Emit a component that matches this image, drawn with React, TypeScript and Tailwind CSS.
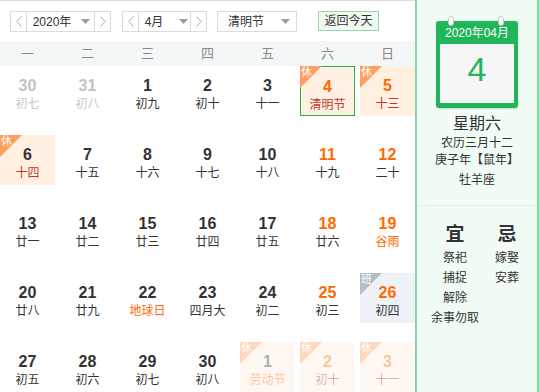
import React from "react";

type Day = {
  n: number;
  lunar: string;
  weekend?: boolean;
  badge?: "休" | "班";
  lunarColor?: "red" | "orange";
  faded?: boolean;
  other?: boolean;
  selected?: boolean;
};

const weeks: Day[][] = [
  [
    { n: 30, lunar: "初七", other: true },
    { n: 31, lunar: "初八", other: true },
    { n: 1, lunar: "初九" },
    { n: 2, lunar: "初十" },
    { n: 3, lunar: "十一" },
    { n: 4, lunar: "清明节", weekend: true, badge: "休", lunarColor: "red", selected: true },
    { n: 5, lunar: "十三", weekend: true, badge: "休", lunarColor: "red" },
  ],
  [
    { n: 6, lunar: "十四", badge: "休", lunarColor: "red" },
    { n: 7, lunar: "十五" },
    { n: 8, lunar: "十六" },
    { n: 9, lunar: "十七" },
    { n: 10, lunar: "十八" },
    { n: 11, lunar: "十九", weekend: true },
    { n: 12, lunar: "二十", weekend: true },
  ],
  [
    { n: 13, lunar: "廿一" },
    { n: 14, lunar: "廿二" },
    { n: 15, lunar: "廿三" },
    { n: 16, lunar: "廿四" },
    { n: 17, lunar: "廿五" },
    { n: 18, lunar: "廿六", weekend: true },
    { n: 19, lunar: "谷雨", weekend: true, lunarColor: "orange" },
  ],
  [
    { n: 20, lunar: "廿八" },
    { n: 21, lunar: "廿九" },
    { n: 22, lunar: "地球日", lunarColor: "orange" },
    { n: 23, lunar: "四月大" },
    { n: 24, lunar: "初二" },
    { n: 25, lunar: "初三", weekend: true },
    { n: 26, lunar: "初四", weekend: true, badge: "班" },
  ],
  [
    { n: 27, lunar: "初五" },
    { n: 28, lunar: "初六" },
    { n: 29, lunar: "初七" },
    { n: 30, lunar: "初八" },
    { n: 1, lunar: "劳动节", badge: "休", lunarColor: "orange", faded: true },
    { n: 2, lunar: "初十", weekend: true, badge: "休", lunarColor: "red", faded: true },
    { n: 3, lunar: "十一", weekend: true, badge: "休", lunarColor: "red", faded: true },
  ],
];

const Chevron = ({ dir }: { dir: "l" | "r" }) => (
  <svg width="6" height="11" viewBox="0 0 6 11" fill="none">
    <path
      d={dir === "l" ? "M5.5 0.5L0.8 5.5L5.5 10.5" : "M0.5 0.5L5.2 5.5L0.5 10.5"}
      stroke="#a8a8a8"
      strokeWidth="1"
    />
  </svg>
);

const Caret = () => (
  <svg width="9" height="5" viewBox="0 0 9 5">
    <path d="M0 0H9L4.5 5Z" fill="#999" />
  </svg>
);

const Stepper = ({ label, width, caretGap }: { label: string; width: string; caretGap: string }) => (
  <div className={`flex h-[21px] ${width} border border-[#dcdcdc] bg-white`}>
    <div className="w-[16px] flex items-center justify-center border-r border-[#dcdcdc]">
      <Chevron dir="l" />
    </div>
    <div className={`flex-1 flex items-center justify-center ${caretGap} text-[12px] text-[#333]`}>
      <span>{label}</span>
      <Caret />
    </div>
    <div className="w-[16px] flex items-center justify-center border-l border-[#dcdcdc]">
      <Chevron dir="r" />
    </div>
  </div>
);

const Cell = ({ d }: { d: Day }) => {
  const bg = d.badge === "班" ? "bg-[#eef2f6]" : d.badge === "休" ? "bg-[#fff0e1]" : "";
  const num = d.other ? "text-[#c4c4c4]" : d.weekend ? "text-[#ff6a00]" : "text-[#333]";
  const lun = d.other
    ? "text-[#c8c8c8]"
    : d.lunarColor === "red"
    ? "text-[#c0392b]"
    : d.lunarColor === "orange"
    ? "text-[#ff6a00]"
    : "text-[#333]";
  return (
    <div
      className={`relative h-[50px] flex flex-col items-center pt-[10px] ${bg} ${
        d.selected ? "border border-[#22b14c] pt-[9px]" : ""
      } ${d.faded ? "opacity-40" : ""}`}
    >
      {d.badge && (
        <div
          className={`absolute left-0 top-0 w-[22px] h-[22px] [clip-path:polygon(0_0,100%_0,0_100%)] ${
            d.badge === "班" ? "bg-[#b5bdc5]" : "bg-[#fba060]"
          } ${d.selected ? "left-[-1px] top-[-1px]" : ""}`}
        >
          <span className="absolute left-[1px] top-[-1px] text-[11px] leading-[14px] text-white">{d.badge}</span>
        </div>
      )}
      <div className={`text-[16px] leading-[20px] font-bold ${num}`}>{d.n}</div>
      <div className={`text-[12px] leading-[16px] ${lun}`}>{d.lunar}</div>
    </div>
  );
};

export default function App() {
  return (
    <div className="w-[539px] h-[392px] overflow-hidden flex bg-white font-['Liberation_Sans','Noto_Sans_CJK_SC',sans-serif]">
      <div className="w-[415px] flex flex-col border-t border-[#dcdcdc]">
        <div className="h-[40px] flex items-start pt-[10px] pl-[10px]">
          <Stepper label="2020年" width="w-[101px]" caretGap="gap-[10px] pl-[2px]" />
          <div className="w-[11px]" />
          <Stepper label="4月" width="w-[85px]" caretGap="gap-[16px] pl-[4px]" />
          <div className="w-[10px]" />
          <div className="flex h-[21px] w-[80px] items-center justify-between border border-[#dcdcdc] pl-[10px] pr-[6px] text-[12px] text-[#333]">
            <span>清明节</span>
            <Caret />
          </div>
          <div className="w-[21px]" />
          <div className="flex h-[20px] w-[61px] items-center justify-center border border-[#8fdaa6] bg-[#f0fcf3] text-[12px] text-[#333]">
            返回今天
          </div>
        </div>
        <div className="h-[25px] bg-[#f3f7f8] grid grid-cols-[repeat(7,55px)] gap-x-[5px] items-center">
          {["一", "二", "三", "四", "五", "六", "日"].map((w) => (
            <div key={w} className="text-center text-[13px] text-[#8a8a8a]">
              {w}
            </div>
          ))}
        </div>
        <div className="grid grid-cols-[repeat(7,55px)] gap-x-[5px] gap-y-[19px]">
          {weeks.flat().map((d, i) => (
            <Cell key={i} d={d} />
          ))}
        </div>
      </div>
      <div className="w-[124px] h-[392px] flex flex-col items-center border-l-2 border-r-2 border-[#82d9a0] bg-[#f1fcf4]">
        <div className="relative mt-[21px] w-[82px] h-[87px] rounded-[3px] bg-[#1fb55a] px-[4px] pb-[5px] flex flex-col shadow-[0_1px_2px_rgba(0,0,0,0.15)]">
          <div className="absolute left-[12px] top-[-5px] w-[6px] h-[10px] rounded-full bg-white border border-[#c8c8c8]" />
          <div className="absolute left-[62px] top-[-5px] w-[6px] h-[10px] rounded-full bg-white border border-[#c8c8c8]" />
          <div className="h-[25px] flex items-center justify-center text-[12px] text-white">2020年04月</div>
          <div className="flex-1 bg-[#f6f6f6] flex items-center justify-center pb-[8px] text-[34px] font-light text-[#1fb55a]">
            4
          </div>
        </div>
        <div className="mt-[6px] text-[16px] leading-[20px] text-[#333]">星期六</div>
        <div className="text-[12px] leading-[18px] text-[#333]">农历三月十二</div>
        <div className="text-[12px] leading-[18px] text-[#333] mt-[-1px]">庚子年【鼠年】</div>
        <div className="mt-[2px] text-[12px] leading-[18px] text-[#333]">牡羊座</div>
        <div className="mt-[16px] w-full h-px bg-[#d8f3e0]" />
        <div className="mt-[17px] w-full flex pl-[12px]">
          <div className="w-[52px] flex flex-col items-center text-[12px] leading-[20px] text-[#333]">
            <div className="text-[19px] leading-[24px] font-bold mb-[1px]">宜</div>
            <div>祭祀</div>
            <div>捕捉</div>
            <div>解除</div>
            <div>余事勿取</div>
          </div>
          <div className="w-[52px] flex flex-col items-center text-[12px] leading-[20px] text-[#333]">
            <div className="text-[19px] leading-[24px] font-bold mb-[1px]">忌</div>
            <div>嫁娶</div>
            <div>安葬</div>
          </div>
        </div>
      </div>
    </div>
  );
}
